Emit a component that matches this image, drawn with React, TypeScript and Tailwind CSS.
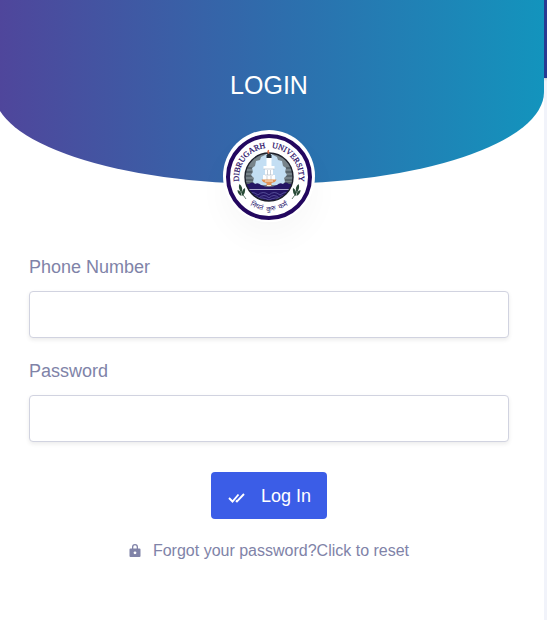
import React from "react";

const Seal = () => (
  <svg viewBox="0 0 92 92" className="block h-[92px] w-[92px]" role="img" aria-label="Dibrugarh University">
    <defs>
      <clipPath id="disc">
        <circle cx="46" cy="47" r="24" />
      </clipPath>
      <path id="top-arc" d="M18.200 59 A30 30 0 1 1 73.800 59" />
      <path id="bottom-arc" d="M17 65 A34.5 34.5 0 0 0 75 65" />
    </defs>
    <circle cx="46" cy="46" r="46" fill="#fff" />
    <circle cx="46" cy="47" r="41" fill="#fff" stroke="#23075f" strokeWidth="4" />
    <g clipPath="url(#disc)">
      <rect x="20" y="20" width="52" height="52" fill="#77838a" />
      <path d="M22 38h9M22 42h7M23 46h6M22 50h8M22 53h10M63 38h8M63 42h7M63 46h7M62 50h9M61 53h10" stroke="#3c464e" />
      <path
        d="M38 27l4-2 4-3 4 3 4 2 1 3 4 1 1 5 3 2-1 4 2 3-3 3 1 4-3 3H33l-3-3 1-4-3-3 2-3-1-4 3-2 1-5 4-1z"
        fill="#c3def3"
      />
      <path
        d="M21 57q2-4 5-3 3-3 6 0 3-2 6 1 4 2 8 2t8-2q3-3 6-1 3-3 6 0 3-1 5 3v16H21z"
        fill="#241464"
      />
      <path d="M22 59.5h48" stroke="#b5b2d6" strokeWidth="0.9" />
      <path
        d="M24 65q5-5 11 0 5-5 11 0 5-5 11 0 6-5 11 0M27 68q4-5 9 0 5-5 10 0 5-5 10 0 5-5 9 0M33 70q6-4 13 0 7-4 13 0"
        fill="none"
        stroke="#615da3"
        strokeWidth="0.8"
      />
    </g>
    <circle cx="46" cy="47" r="24" fill="none" stroke="#1d202b" strokeWidth="1.4" />
    <path d="M43.500 28h5v8h3v3h-1.500v6H52v5H40v-5h2v-6h-1.500v-3h3z" fill="#fff" />
    <path d="M43.500 25.500l1-1.500h3l1 1.500V28h-5z" fill="#222a33" />
    <path d="M46 23.500q-2-2 0-3" fill="none" stroke="#dc6b45" strokeWidth="1.5" />
    <path d="M40.500 39h11M42 45h8M44.500 40v5M47.500 40v5M44 46v4M48 46v4" stroke="#a9b4bf" strokeWidth="0.6" />
    <path d="M38.500 49.500h15q-1 3-5 3.500v3h-5v-3q-4-.5-5-3.500z" fill="#e29355" />
    <path d="M42 51h8M44 55.500h4" stroke="#fff" strokeWidth="0.8" />
    <g fill="#284b36">
      <path d="M18.500 66q-4-2-4-6 4 1 4 6zM18.500 63q-4-5-2-9 4 3 2 9zM19 66q-1-6 3-8 1 5-3 8z" />
      <path d="M73.500 66q4-2 4-6-4 1-4 6zM73.500 63q4-5 2-9-4 3-2 9zM73 66q1-6-3-8-1 5 3 8z" />
    </g>
    <path d="M18 62l5 7M74 62l-5 7" stroke="#284b36" strokeWidth="0.7" />
    <text fill="#23075f" fontFamily="Liberation Serif, serif" fontSize="8" textAnchor="middle" stroke="#23075f" strokeWidth="0.2">
      <textPath href="#top-arc" startOffset="50%">
        DIBRUGARH&nbsp;&nbsp; UNIVERSITY
      </textPath>
    </text>
    <text fill="#2b1a70" fontFamily="Noto Sans Devanagari, Noto Sans, sans-serif" fontSize="7" textAnchor="middle">
      <textPath href="#bottom-arc" startOffset="50%">
        नियतं&nbsp; कुरु&nbsp; कर्म
      </textPath>
    </text>
  </svg>
);

const inputClass =
  "mt-2.5 block h-[47px] w-full rounded border border-[#d1d3e0] bg-white px-4 text-lg text-gray-700 shadow-[0_2px_4px_rgba(0,0,0,0.08)] outline-none focus:border-[#3b5de7]";

const App = () => {
  return (
    <div className="flex min-h-screen bg-[#f1f3fa] font-['Liberation_Sans',Arial,sans-serif] text-[#8083a8]">
      <main className="min-w-0 flex-1 overflow-hidden bg-white">
        <header className="-ml-1.5 flex h-[184px] justify-center rounded-b-[50%] bg-linear-to-r/srgb from-[#50459b] via-[#2f6cac] to-[#1394bd] pt-[66px]">
          <h1 className="text-[25px] leading-[38px] text-white">LOGIN</h1>
        </header>
        <div className="relative -mt-[54px] -ml-1.5 flex justify-center">
          <div className="rounded-full shadow-[0_16px_32px_rgba(0,0,0,0.03)]">
            <Seal />
          </div>
        </div>

        <form className="mt-8 pr-[35px] pb-12 pl-[29px]" onSubmit={(e) => e.preventDefault()}>
          <div>
            <label htmlFor="phone" className="block text-lg leading-[27px]">
              Phone Number
            </label>
            <input id="phone" type="tel" className={inputClass} />
          </div>
          <div className="mt-5">
            <label htmlFor="password" className="block text-lg leading-[27px]">
              Password
            </label>
            <input id="password" type="password" className={inputClass} />
          </div>
          <div className="mt-[30px] flex justify-center">
            <button type="submit" className="flex h-[47px] items-center rounded bg-[#3b5de7] px-4 text-lg text-white">
              <svg viewBox="0 0 18 18" className="mr-4 h-[18px] w-[18px]" fill="none" stroke="currentColor" strokeWidth="1.9">
                <path d="M2 11l3.500 3.500 6-7M9 13.500l1 1 7-7.500" />
              </svg>
              Log In
            </button>
          </div>
          <div className="mt-5 flex justify-center text-base">
            <a href="#" className="flex items-center">
              <svg viewBox="0 0 12 16" className="mr-3 h-4 w-3" fill="currentColor">
                <path
                  fillRule="evenodd"
                  d="M3 5.500V4a3 3 0 0 1 6 0v1.500h1.500a1 1 0 0 1 1 1V13a1 1 0 0 1-1 1h-9a1 1 0 0 1-1-1V6.500a1 1 0 0 1 1-1zm1.300 0h3.400V4a1.700 1.700 0 0 0-3.400 0zM6 8.400a1.400 1.400 0 1 0 0 2.800 1.400 1.400 0 0 0 0-2.800z"
                />
              </svg>
              Forgot your password?Click to reset
            </a>
          </div>
        </form>
      </main>
      <div className="w-[3px] shrink-0 overflow-hidden">
        <div className="h-[78px] bg-[#293a91] shadow-[0_1px_3px_rgba(0,0,0,0.3)]" />
      </div>
    </div>
  );
};

export default App;
